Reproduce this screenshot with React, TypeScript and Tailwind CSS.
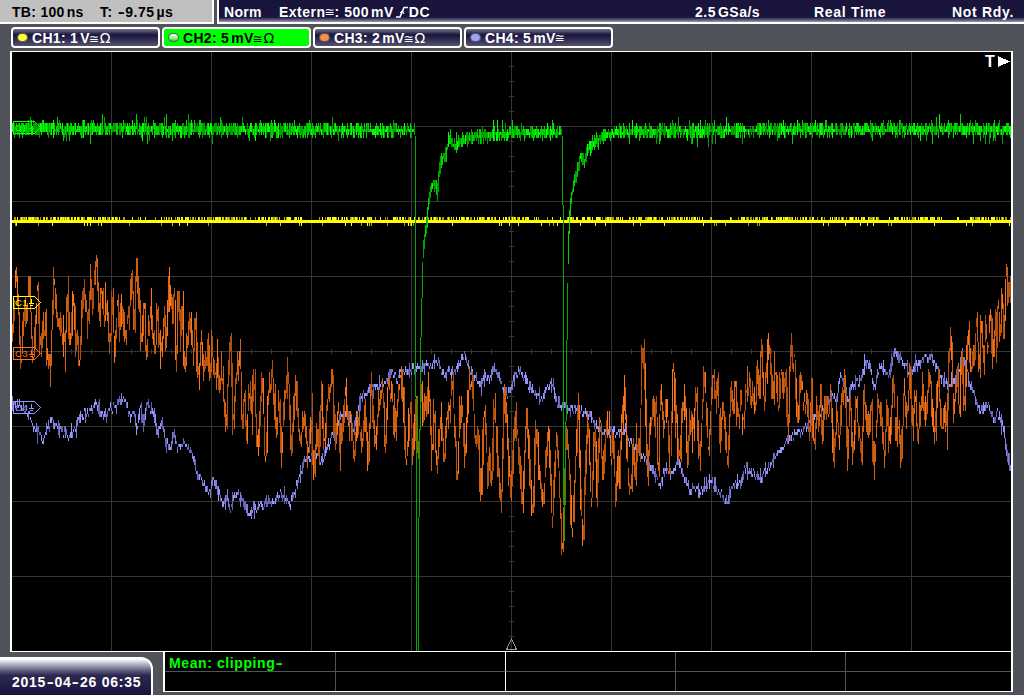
import type { ReactNode } from "react";

type Point = [number, number];
type Column = [number, number, number];

const LEFT = 12;
const RIGHT = 1011;

// flat x,y list -> points
const toPoints = (flat: string): Point[] =>
  flat
    .trim()
    .split(/\s+/)
    .map((p) => p.split(",").map(Number) as Point);

const CH3_POINTS = toPoints(`
12,340 16,268 21,369 24,298 26,330 29,272 33,369 37,286 40,357 44,320 50,378 52,315 54,274 57,330 59,313 65,352
67,289 70,346 73,304 76,335 79,364 84,280 88,333 90,271 92,300 96,259 99,323 101,281 104,325 106,292 110,348
112,283 114,357 117,302 120,340 121,295 125,337 127,330 132,280 134,345 136,256 141,346 144,298 146,360 150,307
155,352 157,313 161,360 164,303 166,350 169,277 173,325 174,274 176,378 178,286 180,335 182,298 184,375 190,313
193,357 195,316 198,390 201,331 203,377 208,337 210,377 211,337 215,387 217,355 219,390 222,367 226,432 230,325
233,432 235,380 240,349 242,430 244,385 246,445 249,385 251,420 254,367 257,453 262,371 265,468 268,395 272,373
276,430 279,393 281,460 284,400 288,373 291,459 295,382 300,440 304,410 308,464 311,406 313,468 317,435 319,456
321,382 324,460 327,400 332,376 335,450 338,405 340,450 345,393 348,430 350,412 354,463 357,415 362,440 365,410
368,471 371,382 375,445 379,400 383,382 385,451 388,376 392,400 395,433 398,385 402,379 406,460 410,405 413,460
416,390 418,468 421,388 424,420 429,377 432,472 434,388 436,472 440,420 444,460 447,400 449,420 452,377 457,478
460,400 465,450 469,378 472,385 475,440 478,420 480,499 484,410 486,445 488,487 489,430 491,490 494,394 498,475
501,514 504,376 508,460 511,495 514,415 519,450 522,514 526,415 529,455 532,523 536,416 539,475 543,504 548,418
552,525 556,434 560,500 562,550 566,437 569,470 572,541 575,470 578,398 580,490 583,547 586,445 588,424 591,507
594,426 597,492 600,410 602,477 605,440 608,418 611,465 613,430 615,498 618,450 620,486 621,393 622,440 624,380
627,460 630,495 634,440 635,483 638,425 640,460 641,350 645,375 647,489 650,425 653,400 655,440 656,388 658,480
660,394 664,425 667,400 670,483 673,361 675,410 679,452 683,405 685,395 687,462 690,420 693,435 696,388 699,471
704,361 708,453 711,400 713,372 715,410 717,370 720,447 723,405 727,468 731,388 733,410 735,376 737,425 741,400
743,438 746,380 747,400 748,376 752,410 753,378 755,415 757,370 759,400 761,340 764,405 766,380 769,334 772,395
775,365 778,412 781,367 784,400 785,365 788,440 790,334 793,375 794,352 798,430 800,373 804,410 807,395 809,444
811,386 814,453 817,397 819,430 820,373 822,435 825,395 828,420 831,395 833,460 837,410 839,440 842,400 845,376
847,460 850,400 853,463 856,391 858,430 861,463 864,392 867,440 871,408 874,463 878,400 882,425 884,465 887,397
889,453 893,383 896,440 898,415 901,460 904,385 907,420 910,367 912,433 915,385 917,438 922,387 924,425 927,395
930,373 934,445 938,371 940,410 942,430 944,405 947,438 948,360 951,328 953,417 957,370 959,415 961,350 964,410
968,328 971,378 973,347 974,370 976,316 979,370 981,325 984,365 985,322 988,348 990,316 993,355 995,313 996,357
998,293 1000,342 1002,292 1004,333 1006,253 1007,306 1009,281 1011,307`);

const CH4_POINTS = toPoints(`
12,407 20,405 27,412 31,418 34,430 38,432 43,440 47,430 51,420 56,426 62,431 70,436 75,430 80,416 85,413 90,411
96,405 100,412 105,416 110,409 117,406 121,397 126,402 129,418 133,410 137,430 140,403 143,425 147,400 150,412
154,410 157,435 161,420 165,441 170,450 173,433 177,449 182,442 187,446 193,457 196,473 202,482 210,493 213,477
217,489 222,503 227,497 230,508 235,493 240,497 245,507 249,515 254,507 262,505 268,502 275,500 280,493 285,497
290,504 295,490 300,472 304,460 310,457 315,455 321,462 327,448 333,434 338,420 344,412 349,420 354,428 358,410
363,395 368,390 375,388 381,384 387,378 392,372 397,380 402,370 408,371 415,368 422,367 430,364 438,364 441,372
446,374 449,368 453,372 458,367 462,358 464,352 467,362 471,374 476,378 480,385 485,377 490,378 494,368 498,375
502,387 507,394 510,389 515,374 520,371 526,383 533,392 541,401 546,389 552,383 556,402 560,407 565,405 570,411
577,409 583,411 590,415 596,426 603,432 611,431 618,433 624,427 628,442 635,445 641,455 646,460 650,465 655,475
660,486 664,470 671,473 678,459 683,478 690,490 695,487 700,491 706,484 711,480 717,491 723,497 727,500 732,485
740,483 745,468 752,471 760,479 766,470 772,462 779,449 785,446 790,437 797,434 803,430 809,423 815,413 821,412
826,405 831,396 836,402 839,380 842,375 845,390 848,399 852,385 857,379 861,382 865,360 869,366 874,390 878,370
883,366 889,377 893,356 895,348 898,355 904,365 910,375 916,364 925,358 931,359 936,368 941,377 947,386 953,380
959,370 962,355 966,370 970,387 975,398 980,412 987,403 993,420 998,412 1001,422 1004,435 1007,455 1011,472`);

const CH2_POINTS = toPoints(`
12,129 100,129 180,129 300,130 414,130 415,134 416,300 421,300 422,262 424,238 426,225 428,204 431,186 434,180
436,186 437,198 438,176 441,160 445,154 449,142 455,146 462,141 470,138 490,135 520,133 561,132 562,136 563,300
567,283 568,241 570,204 572,192 575,178 578,166 580,154 584,162 588,148 595,140 605,135 620,132 760,130 900,129 1011,129`);

// near-vertical edges of the two dips on channel 2
const CH2_EDGES: Column[] = [
  [415, 136, 397],
  [416, 397, 651],
  [418, 517, 651],
  [419, 430, 517],
  [420, 337, 430],
  [421, 298, 337],
  [422, 262, 298],
  [562, 136, 205],
  [563, 205, 505],
  [564, 505, 541],
  [565, 421, 505],
  [566, 340, 421],
  [567, 283, 340],
];

const createRandom = (seed: number) => {
  let s = seed;
  const next = () => {
    s = (s * 1664525 + 1013904223) % 4294967296;
    return s / 4294967296;
  };
  next();
  return next;
};

const interpolate = (points: Point[], x: number) => {
  let i = 1;
  while (i < points.length - 1 && points[i][0] < x) i++;
  const [x0, y0] = points[i - 1];
  const [x1, y1] = points[i];
  const t = Math.min(1, Math.max(0, (x - x0) / (x1 - x0)));
  return y0 + (y1 - y0) * t;
};

const snap = (y: number) => Math.round(y / 3) * 3;

const sampleTrace = (points: Point[], noise: number, seed: number) => {
  const random = createRandom(seed);
  const columns: Column[] = [];
  for (let x = LEFT; x < RIGHT; x++) {
    const burst = random() < 0.22 ? 2.4 : 1;
    const jitter = random() * noise * burst;
    const wobble = (random() - 0.5) * noise;
    const a = interpolate(points, x - 0.5) + wobble;
    const b = interpolate(points, x + 0.5) + wobble;
    const top = snap(Math.min(a, b) - jitter / 2);
    const bottom = Math.max(top + 3, snap(Math.max(a, b) + jitter / 2));
    columns.push([x, top, bottom]);
  }
  return columns;
};

const sampleGreen = () => {
  const random = createRandom(77);
  const columns: Column[] = [];
  for (let x = LEFT; x < RIGHT; x++) {
    const up = random();
    const down = random();
    const spike = random();
    if ((x >= 415 && x <= 422) || (x >= 562 && x <= 567)) continue;
    const a = interpolate(CH2_POINTS, x - 0.5);
    const b = interpolate(CH2_POINTS, x + 0.5);
    const scale = (x > 422 && x < 437) || (x > 567 && x < 574) ? 0.5 : 1;
    const center = (up - down) * 7 * scale;
    const top = snap(Math.min(a, b) - 1 - up * 7 * scale + center - (spike > 0.94 ? 7 : 0));
    const bottom = Math.max(top + 3, snap(Math.max(a, b) + 1 + down * 7 * scale + center + (spike < 0.06 ? 7 : 0)));
    columns.push([x, top, bottom]);
  }
  return columns;
};

const sampleYellow = () => {
  const random = createRandom(5);
  const columns: Column[] = [];
  for (let x = LEFT; x < RIGHT; x++) {
    const busy = Math.sin(x / 13) + Math.sin(x / 31) > -0.9;
    if (random() < (busy ? 0.62 : 0.15)) columns.push([x, 217, 220]);
    if (random() < 0.07) columns.push([x, 223, 226]);
  }
  return columns;
};

const toPath = (columns: Column[]) =>
  columns.map(([x, top, bottom]) => `M${x} ${top}h1V${bottom}h-1z`).join("");

type TraceProps = {
  columns: Column[];
  shades: [string, string, string];
  seed: number;
};

const Trace = ({ columns, shades, seed }: TraceProps) => {
  const random = createRandom(seed);
  const groups: Column[][] = [[], [], []];
  columns.forEach((column) => {
    const tall = column[2] - column[1] > 6;
    const r = random();
    groups[r < (tall ? 0.15 : 0.5) ? 0 : r < 0.65 ? 1 : 2].push(column);
  });
  return (
    <>
      {groups.map((group, i) => (
        <path key={i} d={toPath(group)} fill={shades[i]} />
      ))}
    </>
  );
};

const CH1 = sampleYellow();
const CH2 = sampleGreen();
const CH3 = sampleTrace(CH3_POINTS, 19, 21);
const CH4 = sampleTrace(CH4_POINTS, 7, 9);

const Grid = () => {
  const vertical = Array.from({ length: 9 }, (_, i) => 111 + i * 100);
  const horizontal = Array.from({ length: 7 }, (_, i) => 126 + i * 75);
  const xTicks = Array.from({ length: 49 }, (_, i) => 31 + i * 20);
  const yTicks = Array.from({ length: 39 }, (_, i) => 66 + i * 15);
  return (
    <g fill="#363636">
      {vertical.map((x) => (
        <rect key={x} x={x} y={52} width={1} height={600} />
      ))}
      {horizontal.map((y) => (
        <rect key={y} x={12} y={y} width={1000} height={1} />
      ))}
      {xTicks.map((x) => (
        <rect key={x} x={x} y={349} width={1} height={5} />
      ))}
      {yTicks.map((y) => (
        <rect key={y} x={509} y={y} width={5} height={1} />
      ))}
    </g>
  );
};

const Marker = ({ y, label, color }: { y: number; label: string; color: string }) => (
  <g>
    <path d={`M13.5 ${y - 5.5}H34.5L40.5 ${y + 0.5}L34.5 ${y + 6.5}H13.5Z`} fill="none" stroke={color} />
    <text
      x={15}
      y={y + 4}
      fill={color}
      fontSize={9.5}
      fontWeight={400}
      fontFamily="Liberation Sans, sans-serif"
      letterSpacing={0.6}
    >
      {label}
    </text>
    <path d={`M31.5 ${y - 3}V${y + 1}M29 ${y + 1.5}H34M30 ${y + 3.5}H33`} fill="none" stroke={color} />
  </g>
);

const Screen = () => (
  <div className="ml-[10px] h-[601px] w-[1003px] shrink-0 border-x-2 border-y border-white bg-black">
    <svg className="block" width={999} height={599} viewBox="12 52 999 599" shapeRendering="crispEdges">
      <Grid />
      <path d="M511.5 639L506.5 649.5H516.5Z" fill="none" stroke="#969696" />
      <Trace columns={CH4} shades={["#9696ff", "#7d7dd8", "#6464b4"]} seed={3} />
      <Trace columns={CH3} shades={["#ff7519", "#d2600f", "#b4500e"]} seed={4} />
      <rect x={12} y={220} width={1000} height={3} fill="#ffff00" />
      <Trace columns={CH1} shades={["#ffff00", "#d2d200", "#a5a500"]} seed={6} />
      <path d={toPath(CH2_EDGES)} fill="#00aa00" />
      <Trace columns={CH2} shades={["#00ff00", "#00d200", "#00a000"]} seed={8} />
      <Marker y={127} label="C2" color="#00ff00" />
      <Marker y={302} label="C1" color="#ffff00" />
      <Marker y={353} label="C3" color="#ff7519" />
      <Marker y={407} label="C4" color="#9696ff" />
      <text x={985} y={67} fill="#fff" fontSize={16} fontWeight={700} fontFamily="Liberation Sans, sans-serif">
        T
      </text>
      <path d="M998 56L1010 61.5L998 67Z" fill="#fff" />
    </svg>
  </div>
);

const Coupling = ({ ohm = false }: { ohm?: boolean }) => (
  <span className="font-['DejaVu_Sans'] text-[12px] font-normal tracking-[0px]">
    <span className="mr-px inline-block w-[9px] -translate-x-px">≅</span>
    {ohm && <span className="inline-block text-[14px]">Ω</span>}
  </span>
);

const Unit = ({ children }: { children: ReactNode }) => <span className="ml-[2px]">{children}</span>;

const Dash = () => <span className="mx-[1.5px] inline-block scale-x-150">-</span>;

const Header = () => (
  <div className="flex h-6 shrink-0 gap-[3px]">
    <div className="flex w-[214px] items-center border-r-2 border-b-2 border-white bg-[#c0c0c0] pt-[2px] pl-3 text-black">
      <span className="w-[88px] tracking-[0.3px]">
        TB: 100<Unit>ns</Unit>
      </span>
      <span>
        T: <Dash />9.75<Unit>µs</Unit>
      </span>
    </div>
    <div className="flex flex-1 items-center border-b-2 border-l-2 border-white bg-linear-to-b from-[#19143c] from-78% to-[#9c9ab0] pt-[2px] pl-[5px]">
      <span className="w-[55px] tracking-[0.3px]">Norm</span>
      <span className="flex w-[416px] items-center">
        Extern
        <Coupling />
        <span className="-ml-px">
          : 500<Unit>mV</Unit>
        </span>
        <svg className="ml-[2px]" width="13" height="12" viewBox="0 0 13 12" fill="none" stroke="#fff" strokeWidth="1.6">
          <path d="M0 11H4L8 1.5H12" />
          <path d="M4 7L6.5 4.5L8 8" strokeWidth="1" />
        </svg>
        DC
      </span>
      <span className="w-[119px]">
        2.5<Unit>GSa/s</Unit>
      </span>
      <span className="w-[138px] tracking-[0.7px]">Real Time</span>
      <span className="tracking-[0.7px]">Not Rdy.</span>
    </div>
  </div>
);

type ChannelProps = {
  name: string;
  value: string;
  unit: string;
  ohm?: boolean;
  active?: boolean;
  led: string;
};

const Channel = ({ name, value, unit, ohm, active, led }: ChannelProps) => (
  <div
    className={`flex h-[21px] w-[149px] items-center rounded-[4px] border-2 border-white pl-[4px] ${
      active
        ? "bg-[#00ff00] text-black"
        : "bg-linear-to-b from-[#77758c] via-[#19143c] via-35% to-[#55526f] text-white"
    }`}
  >
    <span className={`mr-[4px] h-[9px] w-[11px] shrink-0 rounded-full border border-[#50545a] ${led}`} />
    <span className="flex h-[15px] items-center tracking-[0.3px]">
      {name}: {value}
      <Unit>{unit}</Unit>
      <Coupling ohm={ohm} />
    </span>
  </div>
);

const Channels = () => (
  <div className="flex h-[27px] shrink-0 gap-[2px] pt-[3px] pl-[11px]">
    <Channel name="CH1" value="1" unit="V" ohm led="bg-[#ffff32]" />
    <Channel name="CH2" value="5" unit="mV" ohm active led="bg-linear-to-b from-white to-[#00dc00]" />
    <Channel name="CH3" value="2" unit="mV" ohm led="bg-[#ff8c46]" />
    <Channel name="CH4" value="5" unit="mV" led="bg-[#a0a0ff]" />
  </div>
);

const Footer = () => (
  <div className="flex h-[43px] shrink-0">
    <div className="mt-[5px] flex w-[153px] items-center rounded-tr-[12px] border-t-2 border-r-2 border-white bg-linear-to-b from-white via-[#2d2850] via-45% to-[#19143c] pt-[10px] pl-3 text-white">
      <span className="tracking-[0.75px] whitespace-nowrap">
        2015
        <Dash />
        04
        <Dash />
        26 06:35
      </span>
    </div>
    <div className="ml-[10px] grid h-10 w-[850px] grid-cols-[171px_170px_170px_170px_1fr] grid-rows-[20px_19px] border-r-2 border-b border-l-2 border-white bg-black">
      {Array.from({ length: 10 }, (_, i) => (
        <div
          key={i}
          className={`${i < 5 ? "border-b border-b-[#50545a]" : ""} ${
            i % 5 === 1 ? "border-r border-r-white" : i % 5 === 4 ? "" : "border-r border-r-[#50545a]"
          }`}
        >
          {i === 0 && (
            <div className="pl-1 leading-[22px] tracking-[0.6px] whitespace-nowrap text-[#00ff00]">
              Mean: clipping
              <Dash />
            </div>
          )}
        </div>
      ))}
    </div>
  </div>
);

const App = () => {
  return (
    <div className="flex h-[695px] w-[1024px] flex-col overflow-hidden bg-[#50545a] font-['Liberation_Sans',sans-serif] text-[14px] leading-none font-bold tracking-[0.5px] whitespace-pre text-white">
      <Header />
      <Channels />
      <Screen />
      <Footer />
    </div>
  );
};

export default App;
